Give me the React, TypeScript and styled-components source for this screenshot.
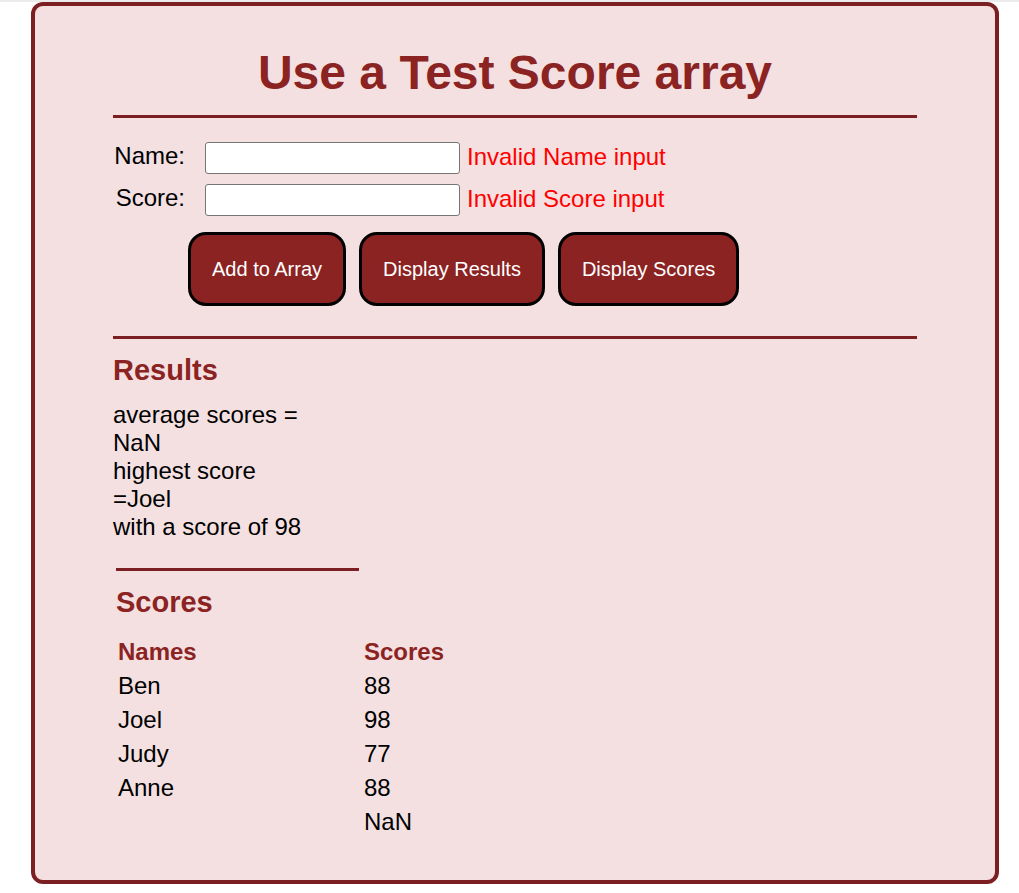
import React from "react";
import styled, { createGlobalStyle } from "styled-components";

const maroon = "#8b2323";
const darkMaroon = "#7b1f23";

const GlobalStyle = createGlobalStyle`
  *, *::before, *::after { box-sizing: border-box; }
  body {
    margin: 0;
    background: #fff;
    color: #000;
    font-family: Arial, "Liberation Sans", sans-serif;
    font-size: 24px;
    line-height: 28px;
  }
`;

const Page = styled.div`
  border-top: 2px solid #ececec;
  padding: 0 20px 9px 31px;
`;

const Panel = styled.main`
  padding: 39px 78px 41px;
  background: #f4e0e0;
  border: 4px solid ${darkMaroon};
  border-radius: 12px;
`;

const Title = styled.h1`
  margin: 0;
  padding-bottom: 14px;
  border-bottom: 3px solid ${darkMaroon};
  color: ${maroon};
  font-size: 48px;
  line-height: 56px;
  text-align: center;
`;

const Form = styled.form`
  display: flex;
  flex-direction: column;
  gap: 10px;
  padding: 24px 0 30px;
  border-bottom: 3px solid ${darkMaroon};
`;

const Field = styled.div`
  display: flex;
  align-items: center;
  height: 32px;
`;

const Label = styled.label`
  flex: none;
  width: 72px;
  margin-right: 20px;
  padding-bottom: 4px;
  text-align: right;
`;

const TextBox = styled.input`
  width: 255px;
  height: 32px;
  padding: 1px 2px;
  border: 1px solid #767676;
  border-radius: 3px;
  background: #fff;
  font: inherit;
`;

const ErrorText = styled.span`
  margin-left: 7px;
  padding-bottom: 2px;
  color: #ff0000;
`;

const Actions = styled.div`
  display: flex;
  flex-wrap: wrap;
  gap: 13px;
  padding: 6px 0 0 75px;
`;

const Button = styled.button`
  height: 74px;
  padding: 0 21px;
  border: 3px solid #000;
  border-radius: 18px;
  background: ${maroon};
  color: #fff;
  font-family: inherit;
  font-size: 20px;
  line-height: 24px;
`;

const SectionTitle = styled.h2`
  margin: 0;
  padding-top: 15px;
  color: ${maroon};
  font-size: 29px;
  line-height: 32px;
`;

const ResultText = styled.p`
  width: 204px;
  margin: 15px 0 27px;
`;

const ScoresSection = styled.section`
  margin-left: 3px;
`;

const ScoresTitle = styled(SectionTitle)`
  width: 243px;
  border-top: 3px solid ${darkMaroon};
`;

const Table = styled.table`
  margin-top: 17px;
  border-collapse: collapse;
  text-align: left;
`;

const HeadCell = styled.th`
  width: 246px;
  height: 34px;
  padding: 0 2px;
  color: ${maroon};
`;

const Cell = styled.td`
  height: 34px;
  padding: 0 2px;
`;

const rows: [string, string][] = [
  ["Ben", "88"],
  ["Joel", "98"],
  ["Judy", "77"],
  ["Anne", "88"],
  ["", "NaN"],
];

export default function App() {
  return (
    <>
      <GlobalStyle />
      <Page>
        <Panel>
          <Title>Use a Test Score array</Title>
          <Form onSubmit={(e) => e.preventDefault()}>
            <Field>
              <Label htmlFor="name">Name:</Label>
              <TextBox id="name" type="text" aria-describedby="name-error" />
              <ErrorText id="name-error">Invalid Name input</ErrorText>
            </Field>
            <Field>
              <Label htmlFor="score">Score:</Label>
              <TextBox id="score" type="text" aria-describedby="score-error" />
              <ErrorText id="score-error">Invalid Score input</ErrorText>
            </Field>
            <Actions>
              <Button type="button">Add to Array</Button>
              <Button type="button">Display Results</Button>
              <Button type="button">Display Scores</Button>
            </Actions>
          </Form>
          <section>
            <SectionTitle>Results</SectionTitle>
            <ResultText>
              average scores = NaN
              <br />
              highest score =Joel
              <br />
              with a score of 98
            </ResultText>
          </section>
          <ScoresSection>
            <ScoresTitle>Scores</ScoresTitle>
            <Table>
              <thead>
                <tr>
                  <HeadCell scope="col">Names</HeadCell>
                  <HeadCell scope="col">Scores</HeadCell>
                </tr>
              </thead>
              <tbody>
                {rows.map(([name, score], i) => (
                  <tr key={i}>
                    <Cell>{name}</Cell>
                    <Cell>{score}</Cell>
                  </tr>
                ))}
              </tbody>
            </Table>
          </ScoresSection>
        </Panel>
      </Page>
    </>
  );
}
